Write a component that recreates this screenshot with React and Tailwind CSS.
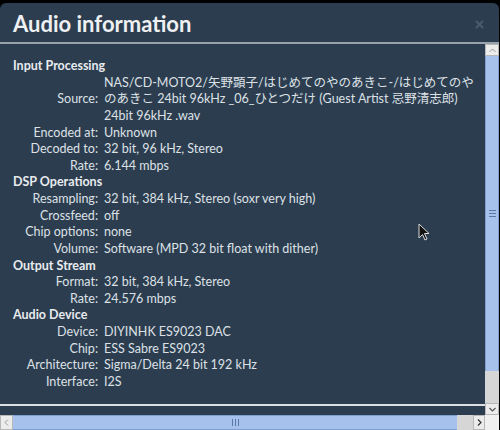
import React from 'react';

const sections = [
  {
    title: 'Input Processing',
    rows: [
      {
        label: 'Source',
        value: [
          'NAS/CD-MOTO2/矢野顕子/はじめてのやのあきこ-/はじめてのや',
          'のあきこ 24bit 96kHz _06_ひとつだけ (Guest Artist 忌野清志郎)',
          '24bit 96kHz .wav',
        ],
      },
      { label: 'Encoded at', value: ['Unknown'] },
      { label: 'Decoded to', value: ['32 bit, 96 kHz, Stereo'] },
      { label: 'Rate', value: ['6.144 mbps'] },
    ],
  },
  {
    title: 'DSP Operations',
    rows: [
      { label: 'Resampling', value: ['32 bit, 384 kHz, Stereo (soxr very high)'] },
      { label: 'Crossfeed', value: ['off'] },
      { label: 'Chip options', value: ['none'] },
      { label: 'Volume', value: ['Software (MPD 32 bit float with dither)'] },
    ],
  },
  {
    title: 'Output Stream',
    rows: [
      { label: 'Format', value: ['32 bit, 384 kHz, Stereo'] },
      { label: 'Rate', value: ['24.576 mbps'] },
    ],
  },
  {
    title: 'Audio Device',
    rows: [
      { label: 'Device', value: ['DIYINHK ES9023 DAC'] },
      { label: 'Chip', value: ['ESS Sabre ES9023'] },
      { label: 'Architecture', value: ['Sigma/Delta 24 bit 192 kHz'] },
      { label: 'Interface', value: ['I2S'] },
    ],
  },
];

const Grip = ({ vertical }) => (
  <div className={vertical ? 'flex flex-col gap-[2px]' : 'flex flex-row gap-[2px]'}>
    {[0, 1, 2].map(i => (
      <div
        key={i}
        className={vertical ? 'w-[7px] h-[1px] bg-[#5a78a8]' : 'h-[7px] w-[1px] bg-[#5a78a8]'}
      />
    ))}
  </div>
);

const Cursor = () => (
  <svg className="absolute left-[418px] top-[223px]" width="12" height="18" viewBox="0 0 12 18">
    <path d="M1 1 L1 15 L4.5 11.5 L7 17 L9 16 L6.5 10.5 L11 10.5 Z" fill="#111" stroke="#ddd" strokeWidth="1" />
  </svg>
);

export default function App() {
  return (
    <div
      className="relative w-[500px] h-[430px] bg-black pt-[3px] pr-[1px] overflow-hidden"
      style={{ fontFamily: 'Lato, "Noto Sans CJK JP", sans-serif' }}
    >
      <div className="h-full bg-[#2c3d50] rounded-t-[6px] flex flex-col">
        {/* Header */}
        <div className="h-[41px] flex items-center justify-between pl-[13px] pr-[15px] pt-[3px] border-b-2 border-[#98a2ad] shrink-0">
          <h2 className="text-[22px] font-bold text-[#eef0f2] leading-none">Audio information</h2>
          <svg width="9" height="9" viewBox="0 0 9 9">
            <path d="M1 1 L8 8 M8 1 L1 8" stroke="#4a5b6d" strokeWidth="2" />
          </svg>
        </div>

        {/* Body */}
        <div className="flex flex-1 min-h-0">
          <div className="flex-1 flex flex-col">
            <div className="flex-1 pt-[14px] pl-[13px]">
              <div className="grid grid-cols-[85px_1fr] gap-x-[6px] items-center text-[12.5px] leading-[16.63px] text-[#dde1e5]">
                {sections.map(s => (
                  <React.Fragment key={s.title}>
                    <div className="col-span-2 font-bold text-[#e8ebee]">{s.title}</div>
                    {s.rows.map(r => (
                      <React.Fragment key={s.title + r.label}>
                        <div className="text-right whitespace-nowrap">{r.label}:</div>
                        <div className="whitespace-nowrap">
                          {r.value.map(v => (
                            <div key={v}>{v}</div>
                          ))}
                        </div>
                      </React.Fragment>
                    ))}
                  </React.Fragment>
                ))}
              </div>
            </div>
            <div className="h-[2px] bg-[#dcdfe2] mb-[9px]" />
          </div>

          {/* Vertical scrollbar */}
          <div className="w-[14px] flex flex-col bg-[#d6d6d6]">
            <div className="h-[12px] bg-[#ececec] border border-[#b8b8b8] flex items-center justify-center">
              <svg width="7" height="5" viewBox="0 0 7 5">
                <path d="M0.5 4 L3.5 1 L6.5 4" fill="none" stroke="#999" strokeWidth="1" />
              </svg>
            </div>
            <div className="h-[315px] bg-[#a6c2ec] border-x border-[#7f9fd2] flex items-center justify-center">
              <Grip vertical />
            </div>
            <div className="flex-1" />
            <div className="h-[12px] bg-[#ececec] border border-[#b8b8b8] flex items-center justify-center">
              <svg width="7" height="5" viewBox="0 0 7 5">
                <path d="M0.5 1 L3.5 4 L6.5 1" fill="none" stroke="#555" strokeWidth="1.2" />
              </svg>
            </div>
          </div>
        </div>

        {/* Horizontal scrollbar */}
        <div className="h-[15px] flex shrink-0 bg-[#d6d6d6]">
          <div className="w-[13px] bg-[#ececec] border border-[#b8b8b8] flex items-center justify-center">
            <svg width="5" height="7" viewBox="0 0 5 7">
              <path d="M4 0.5 L1 3.5 L4 6.5" fill="none" stroke="#999" strokeWidth="1" />
            </svg>
          </div>
          <div className="w-[444px] bg-[#a6c2ec] border-y border-[#7f9fd2] flex items-center justify-center">
            <Grip />
          </div>
          <div className="w-[16px]" />
          <div className="w-[12px] bg-[#ececec] border border-[#b8b8b8] flex items-center justify-center">
            <svg width="5" height="7" viewBox="0 0 5 7">
              <path d="M1 0.5 L4 3.5 L1 6.5" fill="none" stroke="#333" strokeWidth="1.2" />
            </svg>
          </div>
          <div className="flex-1 bg-[#f0f0f0]" />
        </div>
      </div>
      <Cursor />
    </div>
  );
}
